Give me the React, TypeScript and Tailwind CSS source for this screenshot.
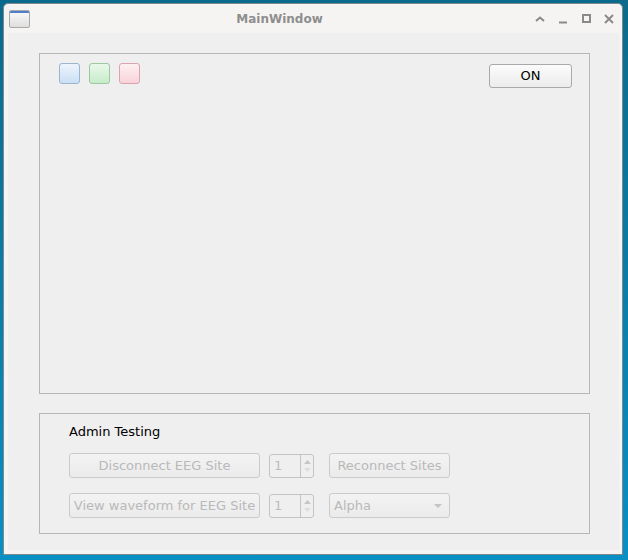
import React from 'react';

const font = { fontFamily: '"DejaVu Sans", "Liberation Sans", sans-serif' };

function TitleButtons() {
  return (
    <div className="flex items-center gap-[13px] pr-[8px] text-[#8a8a8a]">
      <svg width="10" height="6" viewBox="0 0 10 6">
        <path d="M1 5 L5 1.5 L9 5" fill="none" stroke="currentColor" strokeWidth="2" />
      </svg>
      <svg width="10" height="10" viewBox="0 0 10 10">
        <path d="M1 8.5 H9" fill="none" stroke="currentColor" strokeWidth="2" />
      </svg>
      <svg width="10" height="10" viewBox="0 0 10 10">
        <rect x="2" y="1" width="7" height="7" fill="none" stroke="currentColor" strokeWidth="2" />
      </svg>
      <svg width="10" height="10" viewBox="0 0 10 10">
        <path d="M1 1 L9 9 M9 1 L1 9" fill="none" stroke="currentColor" strokeWidth="2" />
      </svg>
    </div>
  );
}

function ColorBox({ cls }: { cls: string }) {
  return <div className={`h-[21px] w-[21px] rounded-[3px] border ${cls}`} />;
}

function DisabledButton({ label, w }: { label: string; w: string }) {
  return (
    <div
      className={`${w} flex h-[25px] items-center justify-center rounded-[3px] border border-[#cbcbcb] bg-gradient-to-b from-[#f3f3f3] to-[#ebebeb] text-[13px] text-[#b9b9b9]`}
    >
      {label}
    </div>
  );
}

function SpinBox() {
  return (
    <div className="flex h-[24px] w-[45px] rounded-[3px] border border-[#c4c4c4] bg-[#efefef]">
      <div className="flex flex-1 items-center pl-[4px] text-[13px] text-[#bdbdbd]">1</div>
      <div className="flex w-[13px] flex-col items-center justify-center gap-[4px] border-l border-[#c4c4c4]">
        <svg width="7" height="4" viewBox="0 0 7 4">
          <path d="M0 4 L3.5 0 L7 4 Z" fill="#c6c6c6" />
        </svg>
        <svg width="7" height="4" viewBox="0 0 7 4">
          <path d="M0 0 L3.5 4 L7 0 Z" fill="#dcdcdc" />
        </svg>
      </div>
    </div>
  );
}

function ComboBox() {
  return (
    <div className="flex h-[25px] w-[121px] items-center justify-between rounded-[3px] border border-[#cbcbcb] bg-gradient-to-b from-[#f3f3f3] to-[#ebebeb] pl-[4px] pr-[7px] text-[13px] text-[#b9b9b9]">
      <span>Alpha</span>
      <svg width="8" height="4" viewBox="0 0 8 4">
        <path d="M0 0 L4 4 L8 0 Z" fill="#c4c4c4" />
      </svg>
    </div>
  );
}

export default function App() {
  return (
    <div
      className="h-[560px] w-[628px] bg-gradient-to-b from-[#0b6a8b] to-[#0890c5] pl-[3px] pt-[3px]"
      style={font}
    >
      <div className="flex h-[552px] w-[620px] flex-col rounded-t-[5px] border border-[#7c8a8f] bg-[#f5f4f2]">
        {/* title bar */}
        <div className="flex h-[29px] items-center justify-between pl-[5px]">
          <div className="h-[18px] w-[21px] overflow-hidden rounded-[2px] border border-[#a9a9a9] bg-gradient-to-b from-[#fafafa] to-[#dedede]">
            <div className="h-[2px] bg-[#4f7fc8]" />
          </div>
          <div className="mr-[6px] text-[12px] font-bold text-[#8e8e8e]">MainWindow</div>
          <TitleButtons />
        </div>

        {/* central widget */}
        <div className="mb-[4px] ml-[4px] mr-[3px] flex flex-1 flex-col bg-[#efefef] pl-[31px] pr-[29px] pt-[20px]">
          <div className="flex h-[341px] items-start justify-between border border-[#b6b6b6] pl-[19px] pr-[17px] pt-[9px]">
            <div className="flex gap-[9px]">
              <ColorBox cls="border-[#9ab4d2] bg-gradient-to-b from-[#eef4fc] to-[#cadff5]" />
              <ColorBox cls="border-[#9cc79f] bg-gradient-to-b from-[#e9f8ea] to-[#c6ecc9]" />
              <ColorBox cls="border-[#dba3ad] bg-gradient-to-b from-[#fdf0f2] to-[#f9d3da]" />
            </div>
            <div className="mt-[1px] flex h-[24px] w-[83px] items-center justify-center rounded-[3px] border border-[#a9a9a9] bg-gradient-to-b from-[#fbfbfb] to-[#ececec] text-[13px] text-black">
              ON
            </div>
          </div>

          <div className="mt-[19px] flex h-[121px] flex-col border border-[#b6b6b6] pl-[29px] pt-[9px]">
            <div className="text-[13px] leading-[18px] text-black">Admin Testing</div>
            <div className="mt-[12px] flex items-center">
              <DisabledButton label="Disconnect EEG Site" w="w-[191px]" />
              <div className="ml-[9px]">
                <SpinBox />
              </div>
              <div className="ml-[15px]">
                <DisabledButton label="Reconnect Sites" w="w-[121px]" />
              </div>
            </div>
            <div className="mt-[15px] flex items-center">
              <DisabledButton label="View waveform for EEG Site" w="w-[191px]" />
              <div className="ml-[9px]">
                <SpinBox />
              </div>
              <div className="ml-[15px]">
                <ComboBox />
              </div>
            </div>
          </div>
        </div>
      </div>
    </div>
  );
}
